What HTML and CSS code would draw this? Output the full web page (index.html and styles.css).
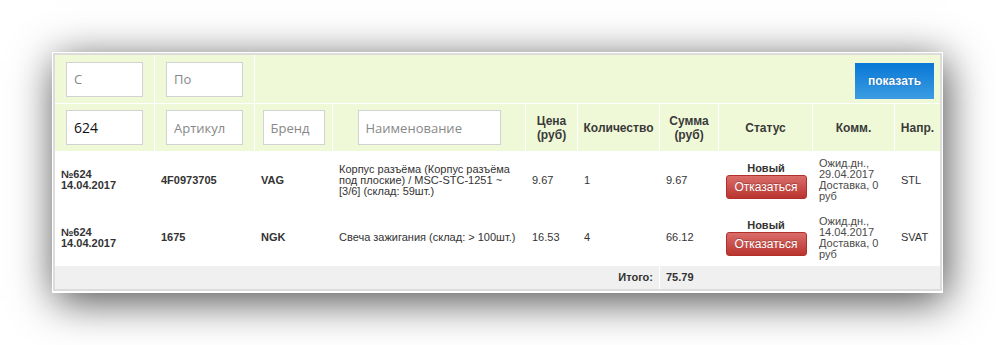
FILE: index.html
```html
<!DOCTYPE html>
<html lang="ru">
<head>
<meta charset="utf-8">
<title>Заказы</title>
<link rel="stylesheet" href="styles.css">
</head>
<body>
<div class="frame">
  <div class="panel">
    <table class="orders">
      <colgroup>
        <col class="c-num"><col class="c-art"><col class="c-brand"><col class="c-name">
        <col class="c-price"><col class="c-qty"><col class="c-sum"><col class="c-status">
        <col class="c-comm"><col class="c-dir">
      </colgroup>
      <thead>
        <tr class="filter-row">
          <td class="sep"><input class="field" type="text" placeholder="С"></td>
          <td class="sep"><input class="field" type="text" placeholder="По"></td>
          <td class="actions" colspan="8"><button class="btn-show" type="button">показать</button></td>
        </tr>
        <tr class="head-row">
          <td class="sep"><input class="field field-dark" type="text" value="624"></td>
          <td class="sep"><input class="field" type="text" placeholder="Артикул"></td>
          <td class="sep"><input class="field field-brand" type="text" placeholder="Бренд"></td>
          <td class="sep"><input class="field field-name" type="text" placeholder="Наименование"></td>
          <th class="sep">Цена<br>(руб)</th>
          <th class="sep">Количество</th>
          <th class="sep">Сумма<br>(руб)</th>
          <th class="sep">Статус</th>
          <th class="sep">Комм.</th>
          <th>Напр.</th>
        </tr>
      </thead>
      <tbody>
        <tr class="row-a">
          <td class="b">№624<br>14.04.2017</td>
          <td class="b">4F0973705</td>
          <td class="b">VAG</td>
          <td>Корпус разъёма (Корпус разъёма под плоские) / MSC-STC-1251 ~ [3/6] (склад: 59шт.)</td>
          <td>9.67</td>
          <td>1</td>
          <td>9.67</td>
          <td class="status"><div class="st-label">Новый</div><button class="btn-cancel" type="button">Отказаться</button></td>
          <td class="comm">Ожид.дн., 29.04.2017 Доставка, 0 руб</td>
          <td>STL</td>
        </tr>
        <tr class="row-b">
          <td class="b">№624<br>14.04.2017</td>
          <td class="b">1675</td>
          <td class="b">NGK</td>
          <td>Свеча зажигания (склад: &gt; 100шт.)</td>
          <td>16.53</td>
          <td>4</td>
          <td>66.12</td>
          <td class="status"><div class="st-label">Новый</div><button class="btn-cancel" type="button">Отказаться</button></td>
          <td class="comm">Ожид.дн., 14.04.2017 Доставка, 0 руб</td>
          <td>SVAT</td>
        </tr>
      </tbody>
      <tfoot>
        <tr class="total-row">
          <td class="total-label sep" colspan="6">Итого:</td>
          <td class="b">75.79</td>
          <td colspan="3"></td>
        </tr>
      </tfoot>
    </table>
  </div>
</div>
</body>
</html>
```
FILE: styles.css
```css
html, body {
  margin: 0;
  padding: 0;
  background: #fff;
}

body {
  min-height: 345px;
  box-sizing: border-box;
  padding: 52px 0 52px 52px;
  font-family: "Liberation Sans", Arial, sans-serif;
  color: #333;
}

.frame {
  width: 889px;
  padding: 1px 1px 2px 1px;
  background: #fff;
  box-shadow: 3px 8px 40px rgba(0, 0, 0, 0.7);
}

.panel {
  border: 2px solid #dcdcdc;
}

.orders {
  width: 885px;
  table-layout: fixed;
  border-collapse: separate;
  border-spacing: 0;
  font-size: 11px;
}

.c-num { width: 100px; }
.c-art { width: 100px; }
.c-brand { width: 78px; }
.c-name { width: 193px; }
.c-price { width: 52px; }
.c-qty { width: 82px; }
.c-sum { width: 59px; }
.c-status { width: 94px; }
.c-comm { width: 82px; }
.c-dir { width: 45px; }

.orders td, .orders th {
  box-sizing: border-box;
  padding: 0 6px;
  vertical-align: middle;
  line-height: 11px;
}

/* filter rows */
.filter-row td,
.head-row td,
.head-row th {
  background: #f0f9d7;
  text-align: center;
}

.filter-row td {
  height: 49px;
  border-bottom: 1px solid #fff;
}

.head-row td,
.head-row th {
  height: 47px;
}

.sep {
  border-right: 1px solid #fff;
}

.head-row th {
  font-size: 12px;
  font-weight: bold;
  line-height: 14px;
  color: #3a3a3a;
  padding: 0 2px;
}

.field {
  box-sizing: border-box;
  width: 77px;
  height: 35px;
  padding: 0 7px;
  margin: 0;
  border: 1px solid #d2d2d2;
  background: #fff;
  font-family: "Open Sans", "Noto Sans", sans-serif;
  font-size: 13px;
  color: #222;
  vertical-align: middle;
}

.field::placeholder {
  color: #888;
}

.field-dark {
  font-size: 14px;
  color: #111;
}

.field-brand { width: 62px; }
.field-name { width: 143px; }

.actions {
  text-align: right !important;
  padding-right: 6px !important;
}

.btn-show {
  width: 79px;
  height: 36px;
  margin-top: 3px;
  border: 0;
  background: linear-gradient(#0877d6, #3c9ce2);
  color: #fff;
  font-family: "Liberation Sans", Arial, sans-serif;
  font-size: 12px;
  font-weight: bold;
  text-shadow: 0 0 1px rgba(0, 40, 100, 0.5);
  vertical-align: middle;
}

/* order rows */
tbody td {
  background: #fff;
  color: #333;
}

.row-a td { height: 58px; }
.row-b td { height: 57px; }

.b {
  font-weight: bold;
}

.status {
  text-align: center;
}

.st-label {
  font-size: 11px;
  font-weight: bold;
  line-height: 13px;
  color: #333;
}

.btn-cancel {
  box-sizing: border-box;
  width: 81px;
  height: 24px;
  margin: 0;
  padding: 0;
  border: 1px solid #b0302c;
  border-radius: 3px;
  background: linear-gradient(#da6d6a, #b9342f);
  color: #fff;
  font-family: "Liberation Sans", Arial, sans-serif;
  font-size: 12px;
  text-shadow: 0 -1px 0 rgba(0, 0, 0, 0.25);
}

.comm {
  color: #4a4a4a;
}

/* totals */
.total-row td {
  height: 23px;
  background: #f0f0f0;
  font-weight: bold;
}

.total-label {
  text-align: right;
}
```
